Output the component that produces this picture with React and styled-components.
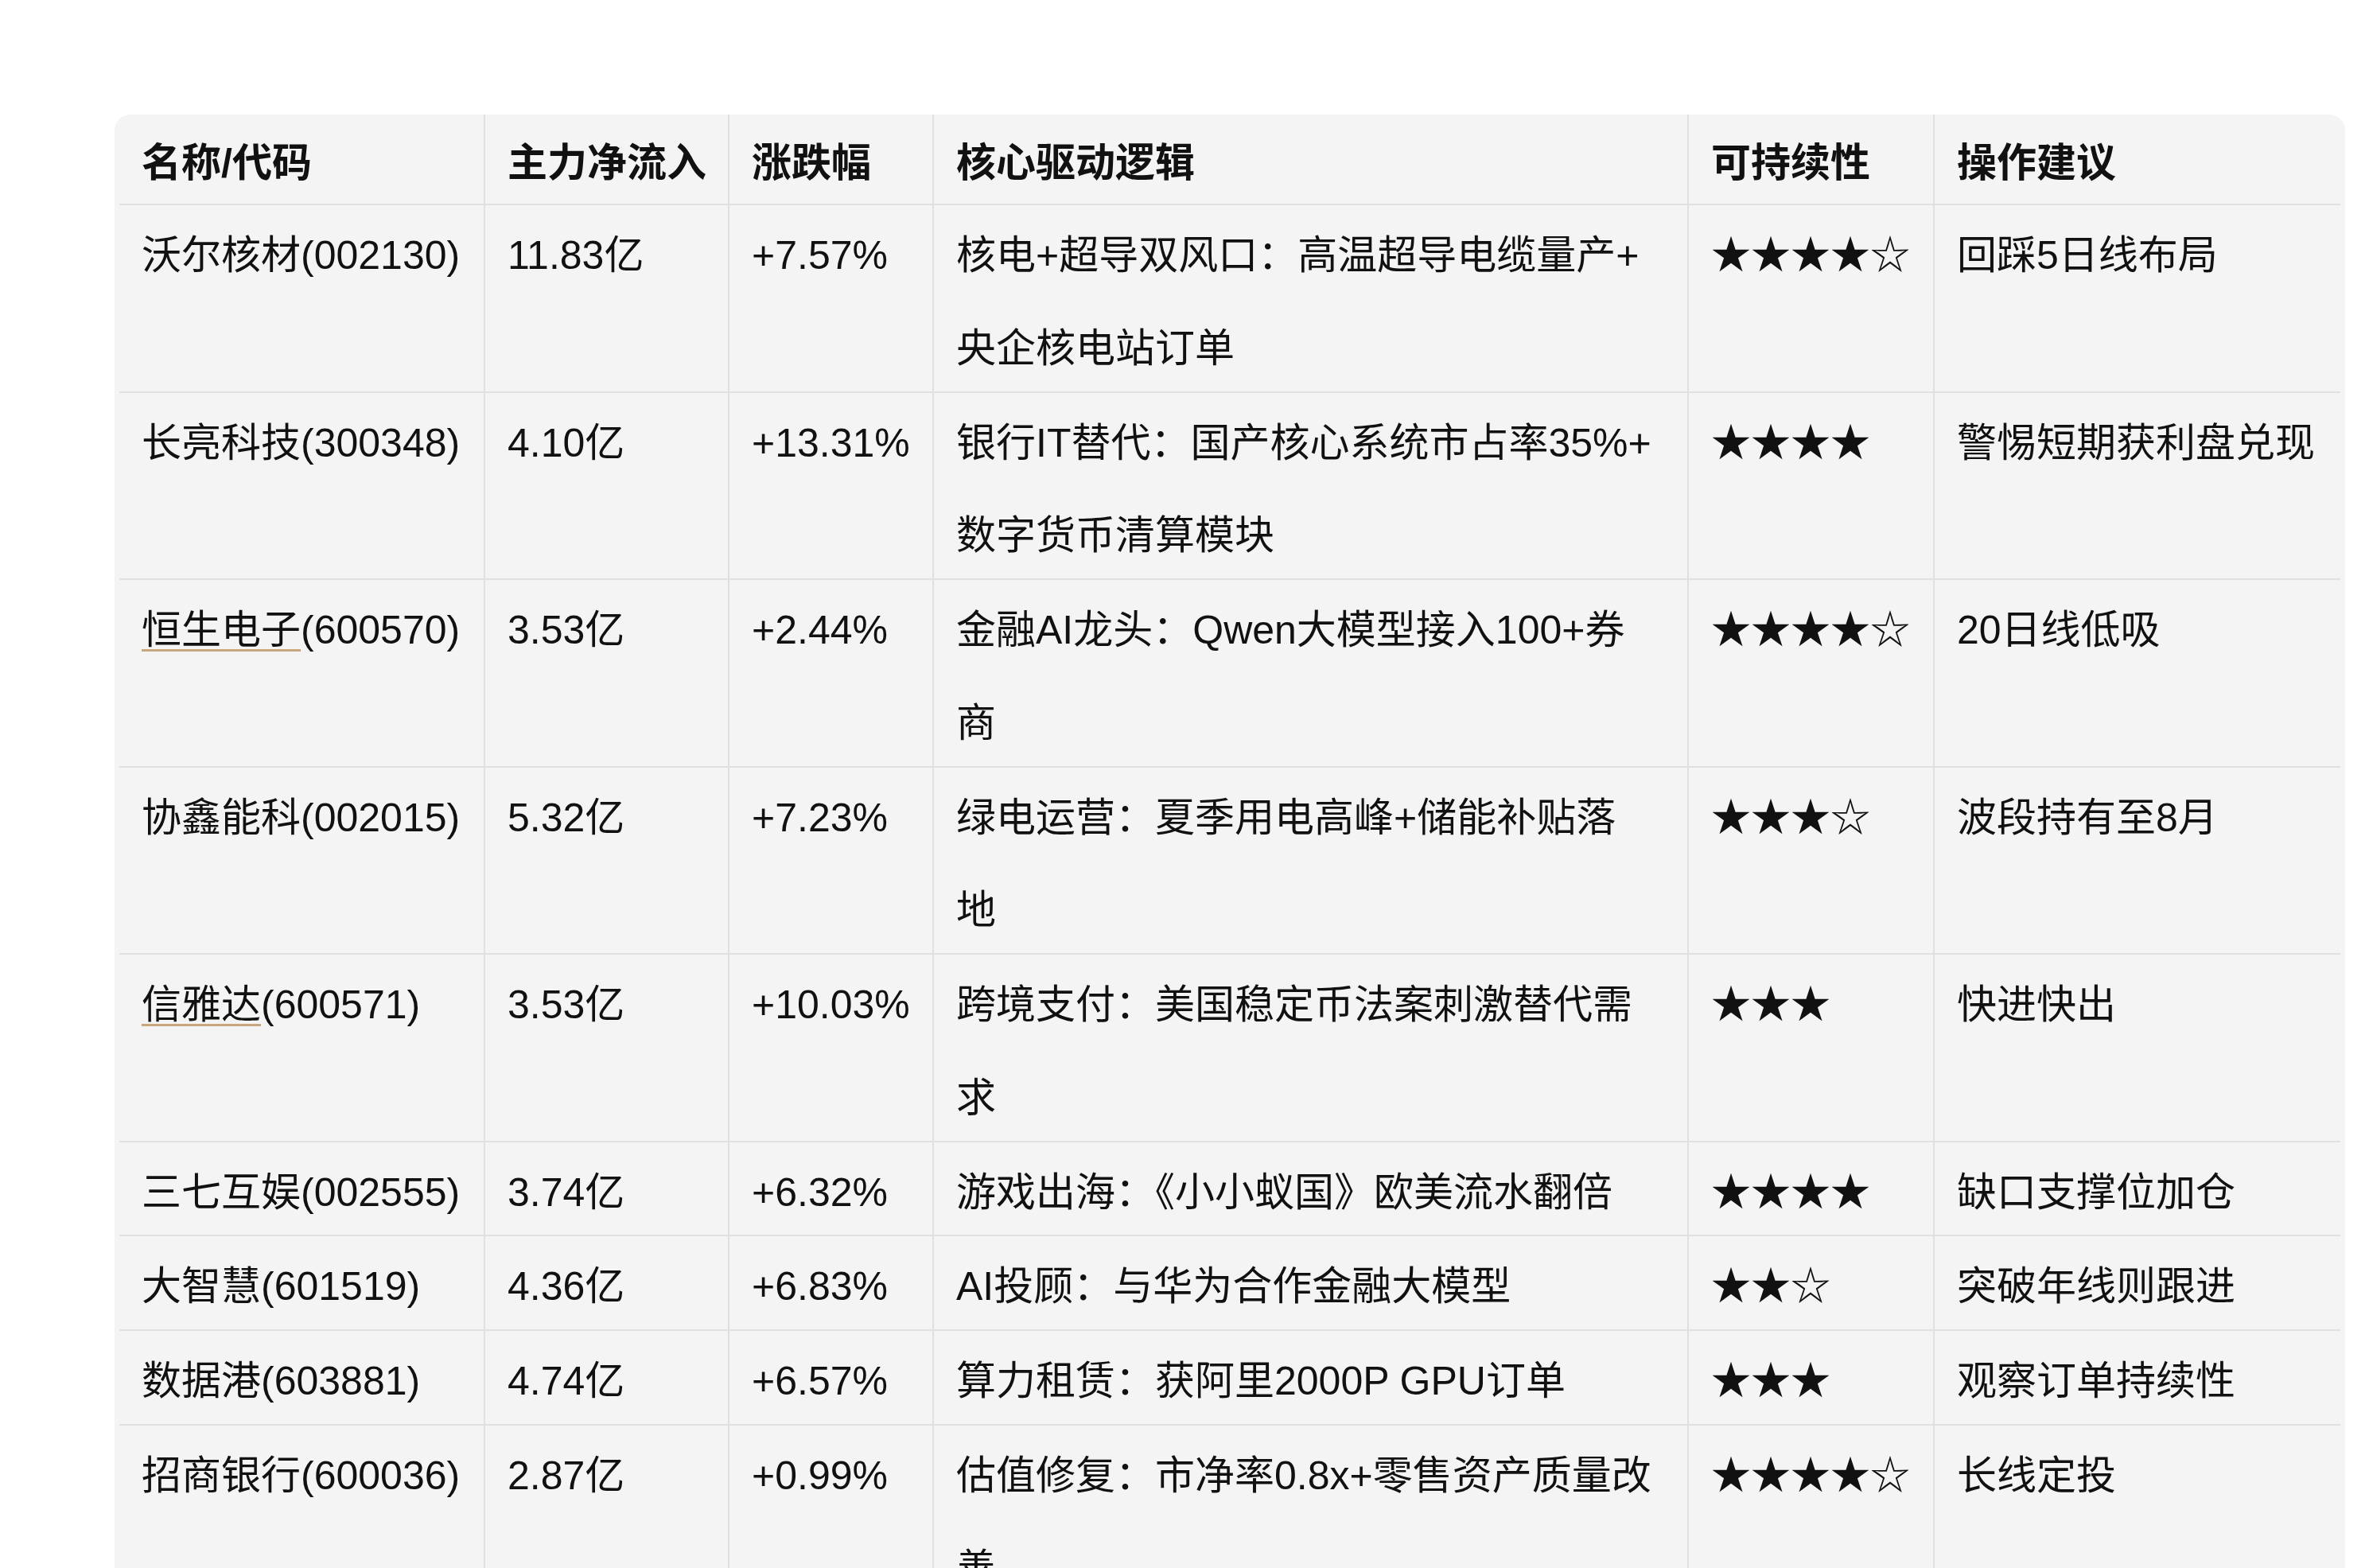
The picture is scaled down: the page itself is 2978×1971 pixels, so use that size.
import React from "react";
import styled, { createGlobalStyle } from "styled-components";

const GlobalStyle = createGlobalStyle`
  html, body {
    margin: 0;
    padding: 0;
    background: #ffffff;
    overflow: hidden;
  }
  body {
    font-family: "Liberation Sans", "Noto Sans CJK SC", sans-serif;
    color: #111111;
  }
`;

const Page = styled.div`
  display: flex;
  padding: 144px 30px 0 144px;
  height: 1971px;
  box-sizing: border-box;
`;

const Card = styled.div`
  background: #f4f4f4;
  border-radius: 20px 20px 0 0;
  padding: 0 6px;
  width: 2804px;
  box-sizing: border-box;
  overflow: hidden;
`;

const Table = styled.table`
  border-collapse: collapse;
  border-style: hidden;
  table-layout: fixed;
  width: 2792px;
`;

const Col = styled.col`
  width: ${(p) => p.$w}px;
`;

// cells use the CJK font for the line strut so glyphs sit a little lower
const HeadCell = styled.th`
  font-family: "Noto Sans CJK SC", sans-serif;
  font-size: 50px;
  font-weight: 700;
  line-height: 112px;
  text-align: left;
  vertical-align: top;
  white-space: nowrap;
  padding: 0 8px 0 28px;
  border: 2px solid #e0e0e0;
`;

const Cell = styled.td`
  font-family: "Noto Sans CJK SC", sans-serif;
  font-size: 50px;
  font-weight: 400;
  line-height: 116.75px;
  vertical-align: top;
  white-space: nowrap;
  padding: 0 8px 0 28px;
  border: 2px solid #e0e0e0;
`;

const Text = styled.span`
  font-family: "Liberation Sans", "Noto Sans CJK SC", sans-serif;
  line-height: normal;
`;

const Driver = styled.div`
  width: 876px;
  white-space: normal;
  line-break: anywhere;
`;

const Marked = styled.span`
  text-decoration: underline;
  text-decoration-color: #c9a77c;
  text-decoration-thickness: 3px;
  text-underline-offset: 7px;
`;

const Stars = styled.span`
  line-height: normal;
`;

const widths = [459, 307, 257, 949, 309, 511];
const heads = ["名称/代码", "主力净流入", "涨跌幅", "核心驱动逻辑", "可持续性", "操作建议"];

const rows = [
  { name: "沃尔核材", code: "002130", flow: "11.83亿", pct: "+7.57%", logic: "核电+超导双风口：高温超导电缆量产+央企核电站订单", stars: "★★★★☆", advice: "回踩5日线布局" },
  { name: "长亮科技", code: "300348", flow: "4.10亿", pct: "+13.31%", logic: "银行IT替代：国产核心系统市占率35%+数字货币清算模块", stars: "★★★★", advice: "警惕短期获利盘兑现" },
  { name: "恒生电子", code: "600570", mark: true, flow: "3.53亿", pct: "+2.44%", logic: "金融AI龙头：Qwen大模型接入100+券商", stars: "★★★★☆", advice: "20日线低吸" },
  { name: "协鑫能科", code: "002015", flow: "5.32亿", pct: "+7.23%", logic: "绿电运营：夏季用电高峰+储能补贴落地", stars: "★★★☆", advice: "波段持有至8月" },
  { name: "信雅达", code: "600571", mark: true, flow: "3.53亿", pct: "+10.03%", logic: "跨境支付：美国稳定币法案刺激替代需求", stars: "★★★", advice: "快进快出" },
  { name: "三七互娱", code: "002555", flow: "3.74亿", pct: "+6.32%", logic: "游戏出海：《小小蚁国》欧美流水翻倍", stars: "★★★★", advice: "缺口支撑位加仓" },
  { name: "大智慧", code: "601519", flow: "4.36亿", pct: "+6.83%", logic: "AI投顾：与华为合作金融大模型", stars: "★★☆", advice: "突破年线则跟进" },
  { name: "数据港", code: "603881", flow: "4.74亿", pct: "+6.57%", logic: "算力租赁：获阿里2000P GPU订单", stars: "★★★", advice: "观察订单持续性" },
  { name: "招商银行", code: "600036", flow: "2.87亿", pct: "+0.99%", logic: "估值修复：市净率0.8x+零售资产质量改善", stars: "★★★★☆", advice: "长线定投" },
];

export default function App() {
  return (
    <>
      <GlobalStyle />
      <Page>
        <Card>
          <Table>
            <colgroup>
              {widths.map((w, i) => (
                <Col key={i} $w={w} />
              ))}
            </colgroup>
            <thead>
              <tr>
                {heads.map((h) => (
                  <HeadCell key={h}>
                    <Text>{h}</Text>
                  </HeadCell>
                ))}
              </tr>
            </thead>
            <tbody>
              {rows.map((r) => (
                <tr key={r.code}>
                  <Cell>
                    <Text>
                      {r.mark ? <Marked>{r.name}</Marked> : r.name}({r.code})
                    </Text>
                  </Cell>
                  <Cell>
                    <Text>{r.flow}</Text>
                  </Cell>
                  <Cell>
                    <Text>{r.pct}</Text>
                  </Cell>
                  <Cell>
                    <Driver>
                      <Text>{r.logic}</Text>
                    </Driver>
                  </Cell>
                  <Cell>
                    <Stars>{r.stars}</Stars>
                  </Cell>
                  <Cell>
                    <Text>{r.advice}</Text>
                  </Cell>
                </tr>
              ))}
            </tbody>
          </Table>
        </Card>
      </Page>
    </>
  );
}
